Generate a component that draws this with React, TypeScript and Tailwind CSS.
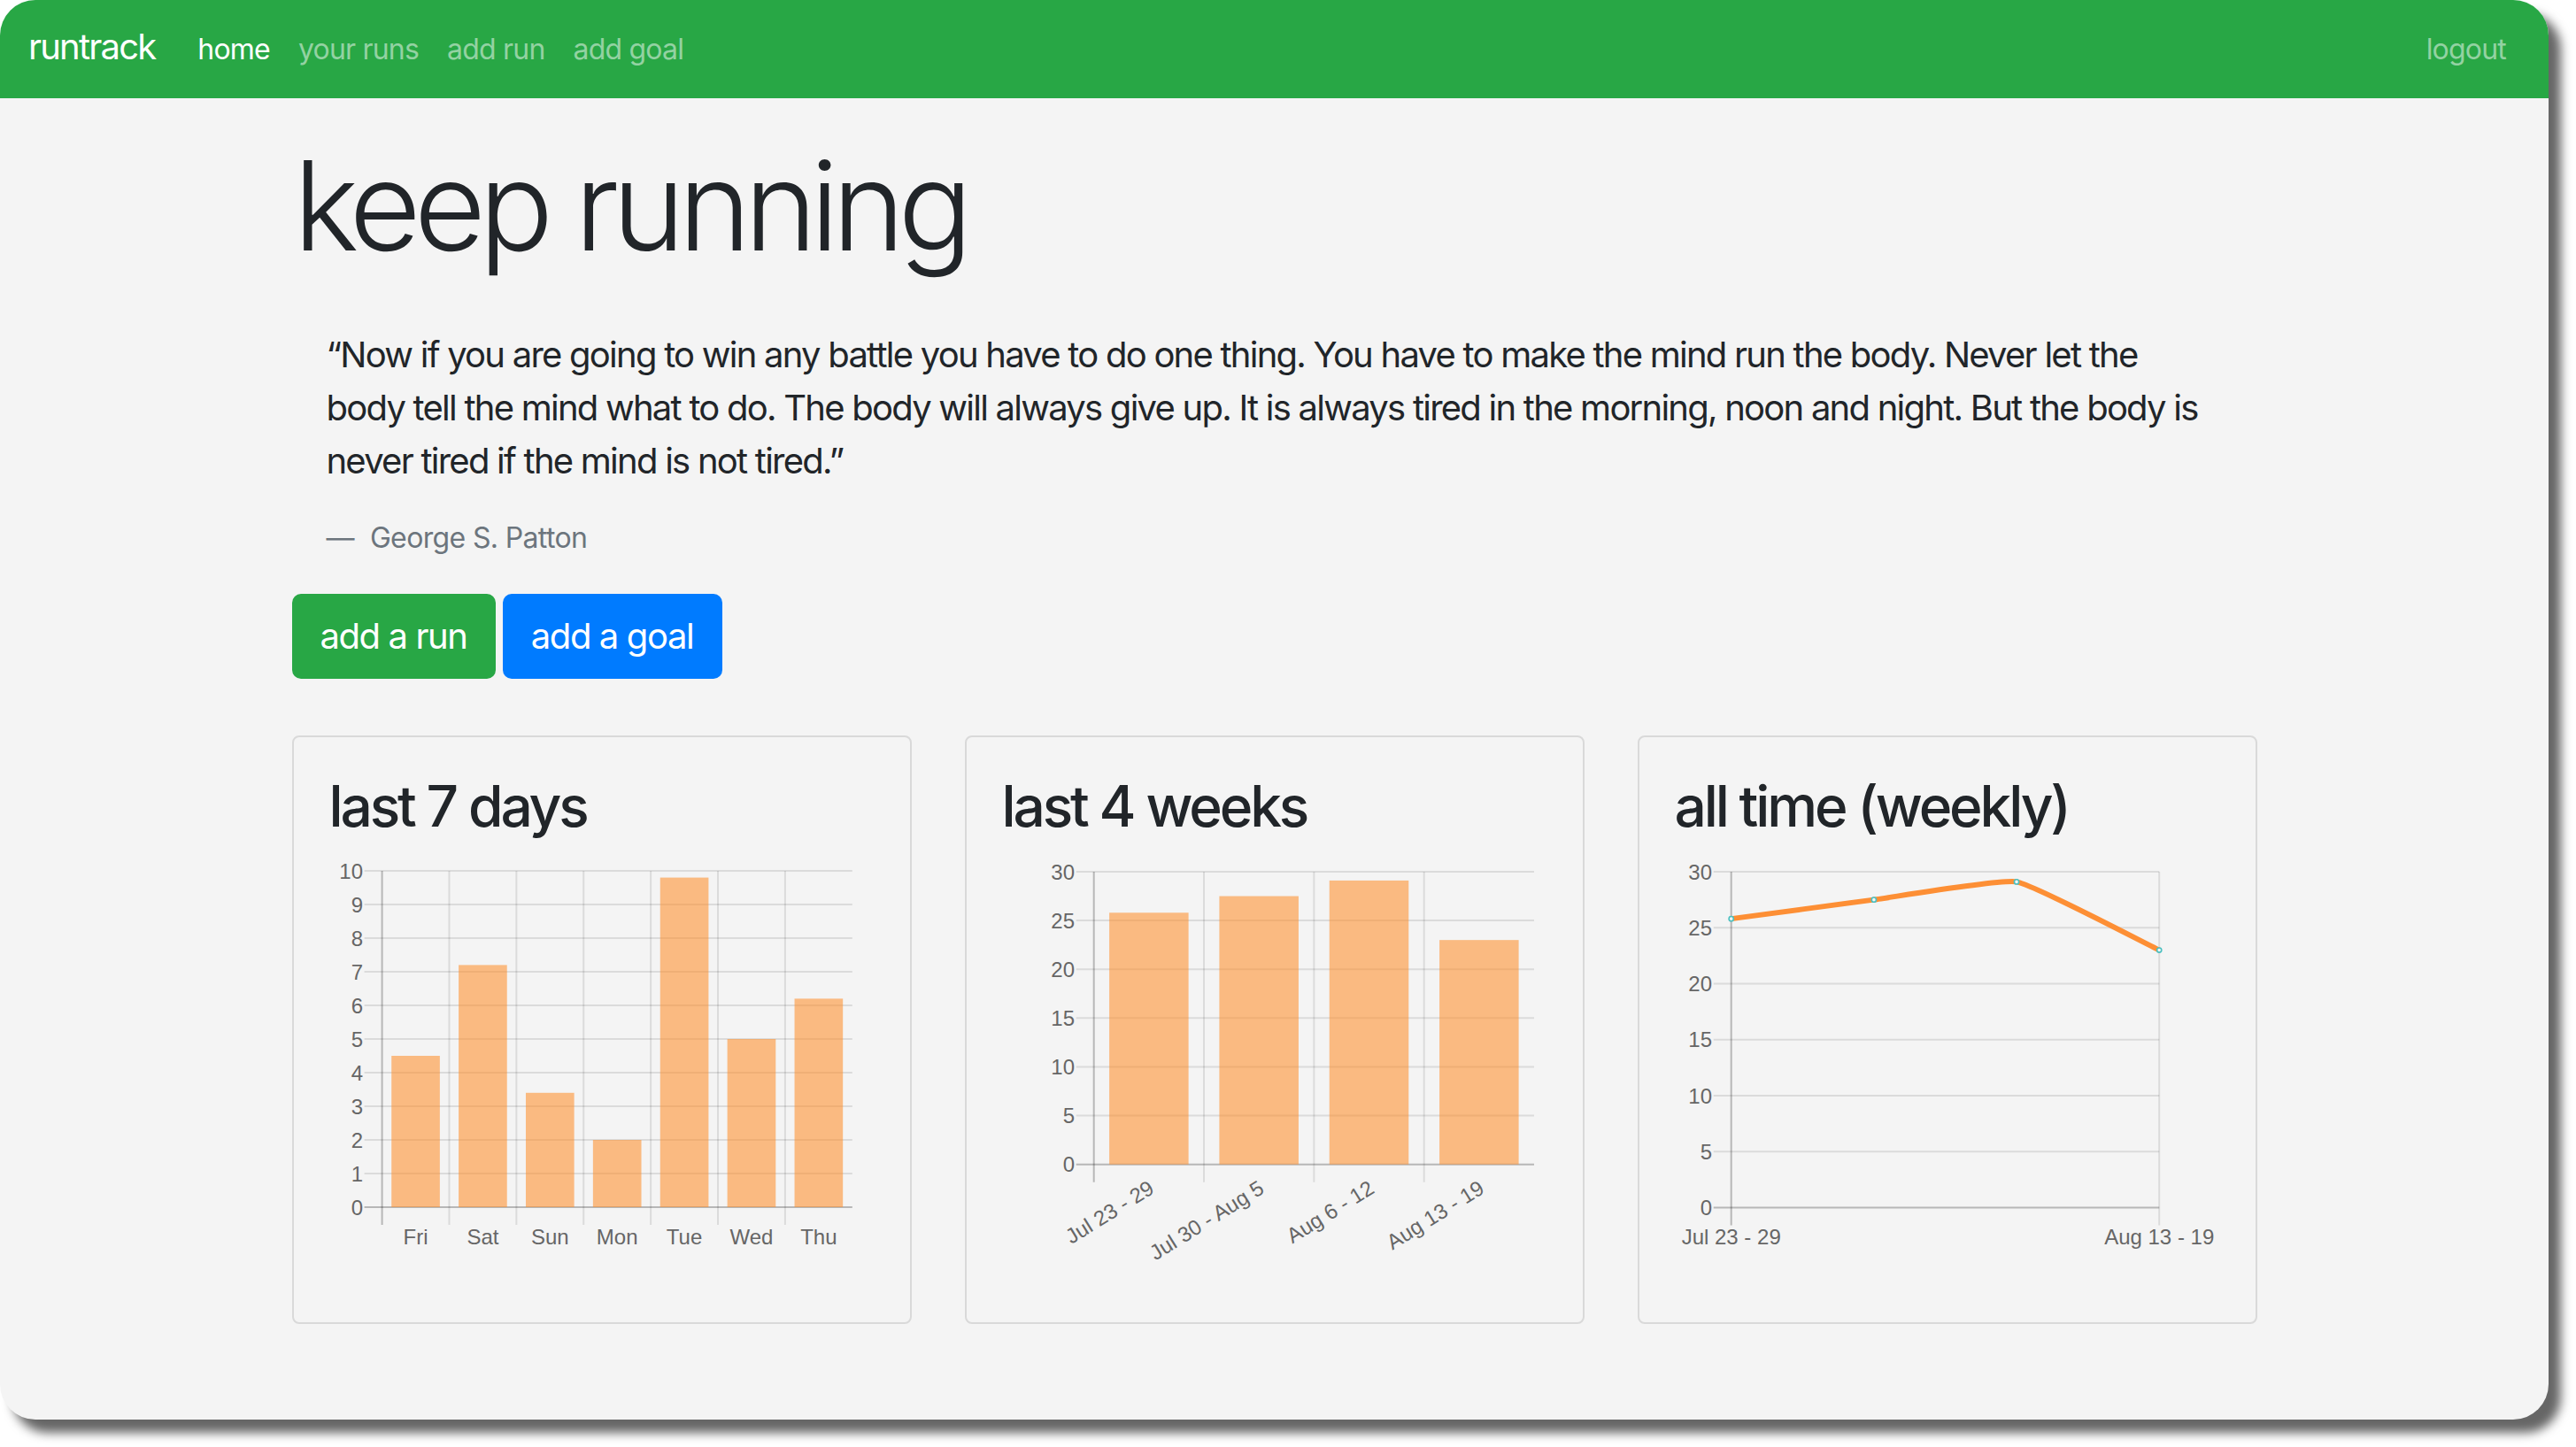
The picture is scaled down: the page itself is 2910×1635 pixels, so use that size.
import React from "react";

const CHART_FONT = "'Liberation Sans', Arial, sans-serif";
const GRID = "rgba(0,0,0,0.1)";
const ZERO = "rgba(0,0,0,0.25)";
const BAR_FILL = "rgba(255,140,40,0.56)";

type BarProps = {
  left: number;
  right: number;
  top: number;
  zero: number;
  max: number;
  step: number;
  labelX: number;
  values: number[];
  labels: string[];
  rotated?: boolean;
};

function BarChart({ left, right, top, zero, max, step, labelX, values, labels, rotated }: BarProps) {
  const n = values.length;
  const cw = (right - left) / n;
  const ticks: number[] = [];
  for (let v = 0; v <= max; v += step) ticks.push(v);
  const yOf = (v: number) => zero - ((zero - top) * v) / max;
  return (
    <svg width={616} height={488} className="block">
      {ticks.map((v) => (
        <g key={v}>
          <line x1={left - 20} x2={right} y1={yOf(v)} y2={yOf(v)} stroke={v === 0 ? ZERO : GRID} strokeWidth={2} />
          <text x={labelX} y={yOf(v) + 8.5} textAnchor="end" fontFamily={CHART_FONT} fontSize={24} fill="#666">
            {v}
          </text>
        </g>
      ))}
      {values.map((_, i) => (
        <line
          key={"v" + i}
          x1={left + i * cw}
          x2={left + i * cw}
          y1={top}
          y2={zero + 20}
          stroke={i === 0 ? ZERO : GRID}
          strokeWidth={2}
        />
      ))}
      {values.map((v, i) => {
        const bw = cw * 0.72;
        const x = left + i * cw + (cw - bw) / 2;
        return <rect key={"b" + i} x={x} y={yOf(v)} width={bw} height={zero - yOf(v)} fill={BAR_FILL} />;
      })}
      {labels.map((l, i) => {
        const cx = left + i * cw + cw / 2;
        if (rotated) {
          return (
            <text
              key={"l" + i}
              x={0}
              y={0}
              textAnchor="end"
              dominantBaseline="central"
              transform={`translate(${cx + 3}, ${zero + 24}) rotate(-32)`}
              fontFamily={CHART_FONT}
              fontSize={24}
              fill="#666"
            >
              {l}
            </text>
          );
        }
        return (
          <text key={"l" + i} x={cx} y={440} textAnchor="middle" fontFamily={CHART_FONT} fontSize={24} fill="#666">
            {l}
          </text>
        );
      })}
    </svg>
  );
}

type Pt = { x: number; y: number };

function LineChart() {
  const left = 63.7;
  const right = 547.2;
  const top = 19;
  const zero = 398.6;
  const max = 30;
  const yOf = (v: number) => zero - ((zero - top) * v) / max;
  const values = [25.8, 27.5, 29.1, 23.0];
  const pts: Pt[] = values.map((v, i) => ({ x: left + ((right - left) * i) / 3, y: yOf(v) }));
  const t = 0.12;
  const cps = pts.map((cur, i) => {
    const prev = i === 0 ? cur : pts[i - 1];
    const next = i === pts.length - 1 ? cur : pts[i + 1];
    const d01 = Math.hypot(cur.x - prev.x, cur.y - prev.y);
    const d12 = Math.hypot(next.x - cur.x, next.y - cur.y);
    let s01 = d01 / (d01 + d12);
    let s12 = d12 / (d01 + d12);
    if (isNaN(s01)) s01 = 0;
    if (isNaN(s12)) s12 = 0;
    const fa = t * s01;
    const fb = t * s12;
    return {
      prev: { x: cur.x - fa * (next.x - prev.x), y: cur.y - fa * (next.y - prev.y) },
      next: { x: cur.x + fb * (next.x - prev.x), y: cur.y + fb * (next.y - prev.y) },
    };
  });
  let d = `M ${pts[0].x} ${pts[0].y}`;
  for (let i = 1; i < pts.length; i++) {
    const c1 = cps[i - 1].next;
    const c2 = cps[i].prev;
    d += ` C ${c1.x} ${c1.y}, ${c2.x} ${c2.y}, ${pts[i].x} ${pts[i].y}`;
  }
  const ticks = [0, 5, 10, 15, 20, 25, 30];
  return (
    <svg width={616} height={488} className="block">
      {ticks.map((v) => (
        <g key={v}>
          <line x1={left - 20} x2={right} y1={yOf(v)} y2={yOf(v)} stroke={v === 0 ? ZERO : GRID} strokeWidth={2} />
          <text x={42} y={yOf(v) + 8.5} textAnchor="end" fontFamily={CHART_FONT} fontSize={24} fill="#666">
            {v}
          </text>
        </g>
      ))}
      <line x1={left} x2={left} y1={top} y2={zero + 20} stroke={ZERO} strokeWidth={2} />
      <line x1={right} x2={right} y1={top} y2={zero + 20} stroke={GRID} strokeWidth={2} />
      <path d={d} fill="none" stroke="#fd8f35" strokeWidth={6} strokeLinejoin="round" />
      {pts.map((p, i) => (
        <circle key={i} cx={p.x} cy={p.y} r={2.6} fill="#f4f4f4" stroke="#4bc0c0" strokeWidth={1.6} />
      ))}
      <text x={left} y={440} textAnchor="middle" fontFamily={CHART_FONT} fontSize={24} fill="#666">
        Jul 23 - 29
      </text>
      <text x={right} y={440} textAnchor="middle" fontFamily={CHART_FONT} fontSize={24} fill="#666">
        Aug 13 - 19
      </text>
    </svg>
  );
}

function Card({ title, children }: { title: string; children: React.ReactNode }) {
  return (
    <div className="h-[665px] rounded-[8px] border-2 border-[#d9d9d9] p-[40px]">
      <h2 className="mb-[16px] text-[64px] font-medium leading-[1.2] tracking-[-0.049em] text-[#212529]">{title}</h2>
      {children}
    </div>
  );
}

export default function App() {
  return (
    <div className="relative h-[1635px] w-[2910px] overflow-hidden bg-white font-[family-name:Inter,sans-serif]">
      <div className="h-[1604px] w-[2879px] overflow-hidden rounded-[40px] bg-[#f4f4f4] shadow-[14px_15px_12px_#666666]">
        <nav className="flex h-[111px] items-baseline bg-[#28a745] px-[32px] pt-[23px]">
          <span className="mr-[32px] text-[40px] leading-[60px] tracking-[-0.045em] text-white">runtrack</span>
          <span className="px-[16px] text-[32px] leading-[48px] tracking-[-0.025em] text-white">home</span>
          <span className="px-[16px] text-[32px] leading-[48px] tracking-[-0.025em] text-[#93d2a2]">your runs</span>
          <span className="px-[16px] text-[32px] leading-[48px] tracking-[-0.025em] text-[#93d2a2]">add run</span>
          <span className="px-[16px] text-[32px] leading-[48px] tracking-[-0.025em] text-[#93d2a2]">add goal</span>
          <span className="ml-auto px-[16px] text-[32px] leading-[48px] tracking-[-0.025em] text-[#93d2a2]">logout</span>
        </nav>
        <main className="mx-auto w-[2220px]">
          <h1 className="mt-[37px] pl-[2px] text-[140px] font-light leading-[1.2] tracking-[-0.056em] text-[#212529]">
            keep running
          </h1>
          <blockquote className="mt-[55px] pl-[39px]">
            <p className="text-[40px] leading-[60px] tracking-[-0.044em] text-[#212529]">
              <span className="block whitespace-nowrap">
                “Now if you are going to win any battle you have to do one thing. You have to make the mind run the body. Never let the
              </span>
              <span className="block whitespace-nowrap">
                body tell the mind what to do. The body will always give up. It is always tired in the morning, noon and night. But the body is
              </span>
              <span className="block whitespace-nowrap">never tired if the mind is not tired.”</span>
            </p>
            <footer className="mt-[33px] text-[32px] leading-[48px] tracking-[-0.02em] text-[#6c757d]">
              <span className="mr-[18px]">—</span>George S. Patton
            </footer>
          </blockquote>
          <div className="mt-[39px] flex gap-[8px]">
            <button className="flex h-[96px] w-[230px] items-center justify-center rounded-[10px] bg-[#28a745] text-[40px] leading-[60px] tracking-[-0.035em] text-white">
              add a run
            </button>
            <button className="flex h-[96px] w-[248px] items-center justify-center rounded-[10px] bg-[#007bff] text-[40px] leading-[60px] tracking-[-0.035em] text-white">
              add a goal
            </button>
          </div>
          <div className="mt-[64px] grid grid-cols-3 gap-[60px]">
            <Card title="last 7 days">
              <BarChart
                left={59.6}
                right={590.8}
                top={18}
                zero={398}
                max={10}
                step={1}
                labelX={38}
                values={[4.5, 7.2, 3.4, 2.0, 9.8, 5.0, 6.2]}
                labels={["Fri", "Sat", "Sun", "Mon", "Tue", "Wed", "Thu"]}
              />
            </Card>
            <Card title="last 4 weeks">
              <BarChart
                left={103.7}
                right={601}
                top={19}
                zero={349.7}
                max={30}
                step={5}
                labelX={82}
                values={[25.8, 27.5, 29.1, 23.0]}
                labels={["Jul 23 - 29", "Jul 30 - Aug 5", "Aug 6 - 12", "Aug 13 - 19"]}
                rotated
              />
            </Card>
            <Card title="all time (weekly)">
              <LineChart />
            </Card>
          </div>
        </main>
      </div>
    </div>
  );
}
